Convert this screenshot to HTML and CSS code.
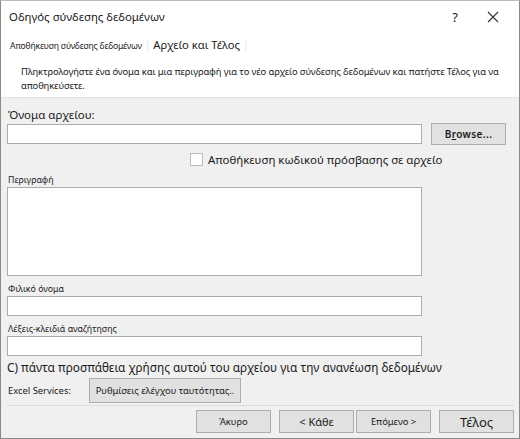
FILE: index.html
```html
<!DOCTYPE html>
<html lang="el">
<head>
  <meta charset="UTF-8">
  <title>Οδηγός σύνδεσης δεδομένων</title>
  <link rel="stylesheet" href="styles.css">
</head>
<body>

<div class="dialog">
  <!-- Τίτλος παραθύρου -->
  <div class="titlebar">
    <span class="title">Οδηγός σύνδεσης δεδομένων</span>
    <span class="help">?</span>
    <svg class="close" width="12" height="12" viewBox="0 0 12 12">
      <path d="M1 1 L11 11 M11 1 L1 11" stroke="#333" stroke-width="1.1" fill="none"/>
    </svg>
  </div>

  <!-- Βήματα και οδηγία -->
  <div class="header">
    <div class="steps">
      <span class="step-done">Αποθήκευση σύνδεσης δεδομένων</span>
      <span class="sep">|</span>
      <span class="step-now">Αρχείο και Τέλος</span>
      <span class="sep">|</span>
    </div>
    <p class="intro">Πληκτρολογήστε ένα όνομα και μια περιγραφή για το νέο αρχείο σύνδεσης δεδομένων και πατήστε Τέλος για να αποθηκεύσετε.</p>
  </div>

  <div class="form">
    <label class="lbl-big">Όνομα αρχείου:</label>
    <div class="file-row">
      <input class="field" type="text">
      <button class="btn browse">B<u>r</u>owse...</button>
    </div>

    <div class="check-row">
      <span class="checkbox"></span>
      <span>Αποθήκευση κωδικού πρόσβασης σε αρχείο</span>
    </div>

    <label class="lbl-small">Περιγραφή</label>
    <textarea class="area"></textarea>

    <label class="lbl-small">Φιλικό όνομα</label>
    <input class="field" type="text">

    <label class="lbl-small">Λέξεις-κλειδιά αναζήτησης</label>
    <input class="field" type="text">

    <div class="always">C) πάντα προσπάθεια χρήσης αυτού του αρχείου για την ανανέωση δεδομένων</div>

    <div class="excel-row">
      <span class="excel-lbl">Excel Services:</span>
      <button class="btn auth">Ρυθμίσεις ελέγχου ταυτότητας..</button>
    </div>
  </div>

  <div class="footer">
    <button class="btn cancel">Άκυρο</button>
    <div class="pair">
      <button class="btn back">&lt; Κάθε</button>
      <button class="btn next">Επόμενο &gt;</button>
    </div>
    <button class="btn finish">Τέλος</button>
  </div>
</div>

</body>
</html>
```

FILE: styles.css
```css
body {
  margin: 0;
  font-family: 'Noto Sans', 'Open Sans', sans-serif;
  color: #1a1a1a;
}

.dialog {
  width: 520px;
  height: 439px;
  box-sizing: border-box;
  border: 1px solid #8a8a8a;
  border-top-color: #bdbdbd;
  background: #f0f0f0;
  display: flex;
  flex-direction: column;
}

/* title bar */
.titlebar {
  height: 31px;
  background: #fff;
  display: flex;
  align-items: center;
  padding: 0 20px 0 8px;
}

.title {
  font-size: 11.4px;
  flex: 1;
}

.help {
  font-size: 13px;
  margin-right: 29px;
}

/* wizard steps + intro */
.header {
  background: #fff;
  height: 65px;
  border-bottom: 1px solid #e3e3e3;
}

.steps {
  display: flex;
  align-items: baseline;
  padding: 5px 0 0 9px;
  height: 20px;
}

.step-done {
  font-size: 8.6px;
  letter-spacing: -0.2px;
}

.step-now {
  font-size: 11.2px;
}

.sep {
  color: #d6e4ef;
  font-size: 10px;
  margin: 0 3px;
}

.intro {
  margin: 8px 4px 0 20px;
  font-size: 9.4px;
  line-height: 14px;
  letter-spacing: -0.1px;
}

/* form area */
.form {
  padding: 9px 0 0 6px;
  width: 500px;
  display: flex;
  flex-direction: column;
}

.lbl-big {
  font-size: 11.5px;
  line-height: 16px;
  padding-left: 1px;
}

.lbl-small {
  font-size: 8.8px;
  line-height: 14px;
  padding-left: 1px;
  margin-top: 6px;
}

.field {
  width: 415px;
  height: 20px;
  box-sizing: border-box;
  border: 1px solid #acacac;
  background: #fff;
  margin: 0;
}

.file-row {
  display: flex;
  align-items: center;
  gap: 9px;
}

.check-row {
  display: flex;
  align-items: center;
  gap: 5px;
  margin: 6px 0 0 183px;
  font-size: 11.4px;
  height: 16px;
}

.checkbox {
  width: 13px;
  height: 13px;
  box-sizing: border-box;
  border: 1px solid #bcbcbc;
  background: #fff;
}

.area {
  width: 415px;
  height: 89px;
  box-sizing: border-box;
  border: 1px solid #acacac;
  resize: none;
  margin: 0;
}

.always {
  font-size: 11.8px;
  line-height: 16px;
  margin-top: 3px;
}

.excel-row {
  display: flex;
  align-items: center;
  margin-top: 3px;
}

.excel-lbl {
  font-size: 9.4px;
  width: 81px;
  padding-left: 1px;
}

/* buttons */
.btn {
  font-family: inherit;
  background: #e1e1e1;
  border: 1px solid #adadad;
  color: #1a1a1a;
  padding: 0;
  margin: 0;
}

.browse {
  width: 75px;
  height: 22px;
  font-size: 10px;
  font-weight: 600;
  letter-spacing: 0.4px;
}

.auth {
  width: 152px;
  height: 25px;
  font-size: 9.4px;
}

.footer {
  margin: auto 5px 5px 6px;
  border-top: 1px solid #dcdcdc;
  padding-top: 4px;
  display: flex;
  justify-content: flex-end;
  gap: 8px;
}

.footer .btn {
  width: 75px;
  height: 23px;
}

.pair {
  display: flex;
  gap: 2px;
}

.cancel, .next {
  font-size: 9.4px;
}

.back {
  font-size: 11px;
}

.finish {
  font-size: 13px;
}
```
